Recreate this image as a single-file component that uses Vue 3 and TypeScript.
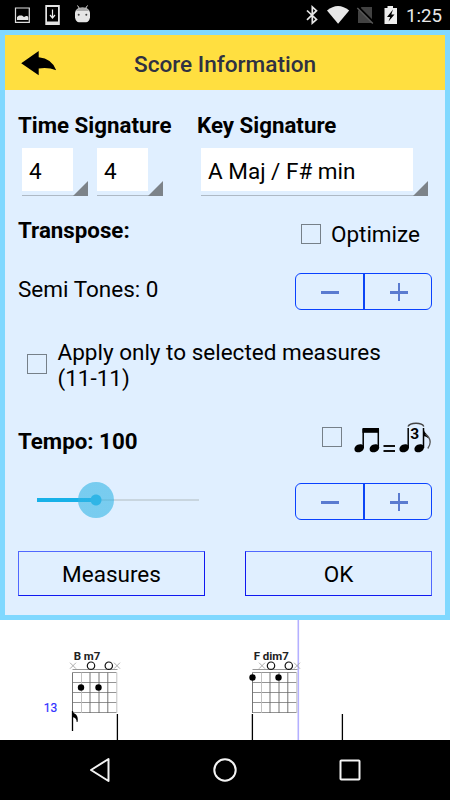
<script setup lang="ts">
import { ref } from 'vue'

interface Chord {
  name: string
  x: number
  nameWidth: number
  muted: number[]
  open: number[]
  dots: [number, number][]
}

const beats = ref<number[]>([4, 4])
const keySignature = ref('A Maj / F# min')
const semiTones = ref(0)
const tempo = ref(100)
const optimize = ref(false)
const selectedOnly = ref(false)
const swing = ref(false)
const strings = [0, 9, 17.5, 26.5, 35.3, 44.3]
const frets = [3, 13, 23, 33, 43]

const chords: Chord[] = [
  { name: 'B m7', x: 72.5, nameWidth: 26.5, muted: [0.5, 44.5], open: [18.5, 36.3], dots: [[8.5, 18], [26, 18]] },
  { name: 'F dim7', x: 252.5, nameWidth: 35, muted: [9.5, 44.5], open: [18.5, 36.3], dots: [[0, 8], [26, 8]] },
]
</script>

<template>
  <div class="phone">
    <header class="status">
      <svg class="status-left" width="110" height="30" viewBox="0 0 110 30">
        <path d="M15.500 8h13.800v14.300h-13.800z" fill="none" stroke="#ddd" stroke-width="1.200" />
        <path d="M17 20v-3l2-1.500h3l2 1.500 2-1h1.500l.8 1.500V20z" fill="#e4e4e4" />
        <path fill-rule="evenodd" d="M45.300 5h14.500v20H45.300zM47 7v14.500h11V7z" fill="#e4e4e4" />
        <path d="M52.500 9.500v8M50 15l2.500 3 2.500-3" fill="none" stroke="#eee" stroke-width="1.200" />
        <path d="M77.500 5.500l2 3M87.500 5.500l-2 3" stroke="#ddd" stroke-width="1" />
        <path d="M75 12.500q1-5 7.500-5t7.500 5v5q-1 4.700-4 4.700h-7q-3 0-4-4.700z" fill="#e5e5e5" />
        <path d="M76 11q2-3.200 6.500-3.200T89 11z" fill="#aaa" />
        <circle cx="78.700" cy="14.800" r="1" fill="#444" />
        <circle cx="86.300" cy="14.800" r="1" fill="#444" />
      </svg>
      <svg class="status-right" width="102" height="30" viewBox="300 0 102 30">
        <path d="M307 10.500l9.500 9-4.200 3.700V7l4.200 3.700L307 19.800" fill="none" stroke="#e6e6e6" stroke-width="1.700" />
        <path d="M327 10.500Q338 1.500 349.200 10.500L338.100 23.800z" fill="#e8e8e8" />
        <path d="M361.500 7h10.500v16h-14V11z" fill="#424242" />
        <path d="M358 7l15.500 15.500" stroke="#000" stroke-width="2.500" />
        <path d="M357.300 8l15.500 15.500" stroke="#5a5a5a" stroke-width="1.400" />
        <path d="M384.500 8h3V6h5.500v2h4v16h-12.500z" fill="#eee" />
        <path d="M393 9.500l-6 7.500h3.200l-1.700 4.500 6-7h-3.200z" fill="#000" />
      </svg>
      <span class="clock">1:25</span>
    </header>

    <main class="dialog">
      <div class="title-bar">
        <svg class="back" width="36" height="26" viewBox="0 0 36 26">
          <path d="M.2 13.200L17.700 1v6.200Q31 8.500 35.200 20.200Q27 17 17.700 18.500v6.700z" fill="#000" />
        </svg>
        <h1>Score Information</h1>
      </div>

      <div class="content">
        <div class="row labels">
          <span class="bold time-label">Time Signature</span>
          <span class="bold">Key Signature</span>
        </div>
        <div class="row spinners">
          <div v-for="(b, i) in beats" :key="i" class="spinner"><div class="value">{{ b }}</div></div>
          <div class="spinner key"><div class="value">{{ keySignature }}</div></div>
        </div>
        <div class="row transpose">
          <span class="bold">Transpose:</span>
          <label class="option optimize" @click="optimize = !optimize">
            <span class="box" :class="{ on: optimize }"></span>Optimize
          </label>
        </div>
        <div class="row semi">
          <span class="semi-text">Semi Tones: {{ semiTones }}</span>
          <div class="stepper">
            <button class="minus" @click="semiTones--"></button>
            <button class="plus" @click="semiTones++"></button>
          </div>
        </div>
        <div class="row apply" @click="selectedOnly = !selectedOnly">
          <span class="box" :class="{ on: selectedOnly }"></span>
          <span class="apply-text">Apply only to selected measures<br>(11-11)</span>
        </div>
        <div class="row tempo">
          <span class="bold tempo-text">Tempo: {{ tempo }}</span>
          <div class="option swing" @click="swing = !swing">
            <span class="box" :class="{ on: swing }"></span>
            <svg class="notes" width="79" height="34" viewBox="353 420 79 34">
              <g fill="#000">
                <ellipse cx="359.200" cy="447.300" rx="5" ry="3.800" transform="rotate(-25 359.200 447.300)" />
                <ellipse cx="374.400" cy="447.300" rx="5" ry="3.800" transform="rotate(-25 374.400 447.300)" />
                <path d="M362.500 427h16.500v4.800h-16.500z" />
                <ellipse cx="404.200" cy="447.300" rx="5" ry="3.800" transform="rotate(-25 404.200 447.300)" />
                <ellipse cx="419.200" cy="447.300" rx="5" ry="3.800" transform="rotate(-25 419.200 447.300)" />
                <path d="M423.200 427.500q1 4 4.500 7l1 3q-2.500-2.300-5.500-2.500z" />
              </g>
              <path d="M425.500 433q8 6.500 2.300 14.500" fill="none" stroke="#555" stroke-width="1.300" />
              <path d="M363.200 428v19M378.300 428v19M408.200 427v20M423.500 427v20" stroke="#000" stroke-width="1.500" />
              <path d="M383.500 445H395M383.500 450H395" stroke="#111" stroke-width="1.800" />
              <path d="M408 425.500q1.500-3.300 8-3.300t7.800 3.300" fill="none" stroke="#444" stroke-width="1.400" />
              <text x="410.300" y="438" class="triplet">3</text>
            </svg>
          </div>
        </div>
        <div class="row slide">
          <div class="slider"><div class="filled"></div><div class="thumb"></div></div>
          <div class="stepper">
            <button class="minus" @click="tempo--"></button>
            <button class="plus" @click="tempo++"></button>
          </div>
        </div>
        <div class="row actions">
          <button>Measures</button>
          <button class="ok">OK</button>
        </div>
      </div>
    </main>

    <svg class="score" width="450" height="120" viewBox="0 620 450 120">
      <path d="M298.300 620v120" stroke="#b4b0ff" stroke-width="1.600" />
      <text x="43.700" y="712.300" class="measure">13</text>
      <g v-for="c in chords" :key="c.name" :transform="`translate(${c.x} 669.5)`">
        <text x="1.300" y="-9.300" class="chord" :textLength="c.nameWidth">{{ c.name }}</text>
        <path d="M0 0H45" stroke="#999" stroke-width="1" />
        <path v-for="f in frets" :key="`f${f}`" :d="`M0 ${f}H44`" stroke="#888" stroke-width=".9" />
        <path v-for="(s, i) in strings" :key="`s${s}`" :d="`M${s} 3V43.500`" :stroke="i === 1 || i === 5 ? '#bbb' : '#666'" stroke-width=".9" />
        <path v-for="m in c.muted" :key="`m${m}`" :d="`M${m - 3} -6.800l6 6m0 -6l-6 6`" stroke="#999" stroke-width=".8" />
        <circle v-for="o in c.open" :key="`o${o}`" :cx="o" cy="-3.800" r="3.700" fill="#fff" stroke="#111" stroke-width="1.200" />
        <circle v-for="d in c.dots" :key="`d${d[0]}`" :cx="d[0]" :cy="d[1]" r="3.200" fill="#000" />
      </g>
      <path d="M72.500 711v20M117.400 714v26M252.400 714v26M342.400 714v26" stroke="#000" stroke-width="1.300" />
      <path d="M72 711q1.500 2 4 3.500q2.500 2.500 1.500 7.500h-.8q0-4.500-4.700-5z" fill="#000" />
    </svg>

    <nav class="nav">
      <svg width="450" height="60" viewBox="0 740 450 60" fill="none" stroke="#f4f4f4" stroke-width="2">
        <path d="M108.500 759v22L91 770z" stroke-linejoin="round" />
        <circle cx="225" cy="770" r="10.700" />
        <rect x="340.500" y="760.500" width="19" height="19" rx=".8" />
      </svg>
    </nav>
  </div>
</template>

<style>
body {
  margin: 0;
  background: #fff;
}
</style>

<style scoped>
.phone {
  width: 450px;
  height: 800px;
  overflow: hidden;
  display: flex;
  flex-direction: column;
  font-family: Roboto, "Liberation Sans", sans-serif;
  font-size: 22.5px;
  line-height: 26px;
  color: #000;
  background: #fff;
}
.phone *, .phone {
  box-sizing: border-box;
}
svg {
  display: block;
  flex: none;
}
.status {
  height: 30px;
  background: #000;
  display: flex;
  align-items: center;
}
.status-right {
  margin-left: 190px;
}
.clock {
  color: #e8e8e8;
  font-size: 18.7px;
  margin-left: 4px;
  line-height: 30px;
  padding-top: 1px;
}
.dialog {
  height: 590px;
  border: 5px solid #80d8ff;
  background: #e0efff;
}
.title-bar {
  height: 55px;
  background: #ffdf40;
  display: flex;
  align-items: center;
  padding-left: 16px;
}
h1 {
  margin: 4px 0 0 77px;
  font-size: 22.6px;
  font-weight: 500;
  color: #2f3142;
  white-space: nowrap;
}
.content {
  padding: 0 13px;
}
.row {
  display: flex;
  align-items: center;
  justify-content: space-between;
  white-space: nowrap;
}
.bold {
  font-size: 22.3px;
  font-weight: 700;
}
.labels {
  height: 58px;
  justify-content: flex-start;
  padding-top: 12px;
}
.time-label {
  width: 179px;
}
.spinners {
  height: 48px;
  padding-left: 4px;
  justify-content: flex-start;
  align-items: flex-start;
  gap: 9px;
}
.spinner {
  position: relative;
  width: 66px;
  height: 48px;
  padding-right: 15px;
  border-bottom: 1px solid #aeb9c5;
}
.spinner::after {
  content: "";
  position: absolute;
  right: 0;
  bottom: -1px;
  width: 15px;
  height: 15px;
  background: #7d8389;
  clip-path: polygon(100% 0, 100% 100%, 0 100%);
}
.spinner.key {
  width: 227px;
  margin-left: 29px;
}
.value {
  height: 43px;
  background: #fff;
  padding: 10px 0 0 7px;
}
.transpose {
  height: 68px;
}
.option {
  display: flex;
  align-items: center;
}
.optimize {
  margin-top: 8px;
  padding-right: 12px;
  gap: 10px;
}
.box {
  width: 20px;
  height: 20px;
  flex: none;
  border: 1px solid #768089;
}
.box.on {
  background: #33b5e5;
}
.semi {
  height: 55px;
}
.semi-text {
  margin-top: -5px;
}
.stepper {
  display: flex;
  width: 137px;
  height: 37px;
  border: 1px solid #0a42ff;
  border-radius: 6px;
}
.stepper button {
  flex: 1;
  border: 0;
  padding: 0;
  background: linear-gradient(#5a7bd0, #5a7bd0) 25px 17px / 18px 3px no-repeat;
}
.stepper .minus {
  border-right: 2px solid #0c45f5;
}
.stepper .plus {
  background:
    linear-gradient(#5a7bd0, #5a7bd0) 25px 17px / 18px 3px no-repeat,
    linear-gradient(#5a7bd0, #5a7bd0) 33px 9px / 2px 18px no-repeat;
}
.apply {
  height: 92px;
  justify-content: flex-start;
  padding-left: 9px;
  gap: 10px;
}
.apply .box {
  margin-top: -2px;
}
.apply-text {
  padding-left: .5px;
}
.tempo {
  height: 64px;
  padding-bottom: 6px;
}
.tempo-text {
  margin-top: 1px;
}
.swing {
  gap: 11px;
  margin-top: -5px;
}
.swing .box {
  margin-top: -2px;
}
.triplet {
  font: 700 15.500px Roboto, sans-serif;
}
.slide {
  height: 53px;
}
.slider {
  position: relative;
  width: 162px;
  height: 2px;
  margin: -3px 0 0 19px;
  background: #c8d5df;
}
.filled {
  position: absolute;
  left: 0;
  top: -1px;
  width: 59px;
  height: 4px;
  background: #18b1e8;
}
.thumb {
  position: absolute;
  left: 41px;
  top: -17px;
  width: 36px;
  height: 36px;
  border-radius: 50%;
  background: radial-gradient(circle, #30b5e6 5px, rgba(51, 181, 229, 0.6) 6px);
}
.actions {
  height: 90px;
}
.actions button {
  width: 187px;
  height: 45px;
  padding: 2px 0 0;
  border: 1px solid #1018f0;
  border-top-color: #5068ff;
  border-left-color: #5068ff;
  background: none;
  color: #000;
  font: inherit;
}
.actions .ok {
  border-left-color: #1018f0;
  border-right-color: #5068ff;
}
.score {
  background: #fff;
}
.measure {
  font: 12px Roboto, sans-serif;
  fill: #3030ff;
  stroke: #3030ff;
  stroke-width: .2px;
}
.chord {
  font: 700 11.500px Roboto, sans-serif;
  fill: #222;
}
.nav {
  height: 60px;
  background: #000;
}
</style>
